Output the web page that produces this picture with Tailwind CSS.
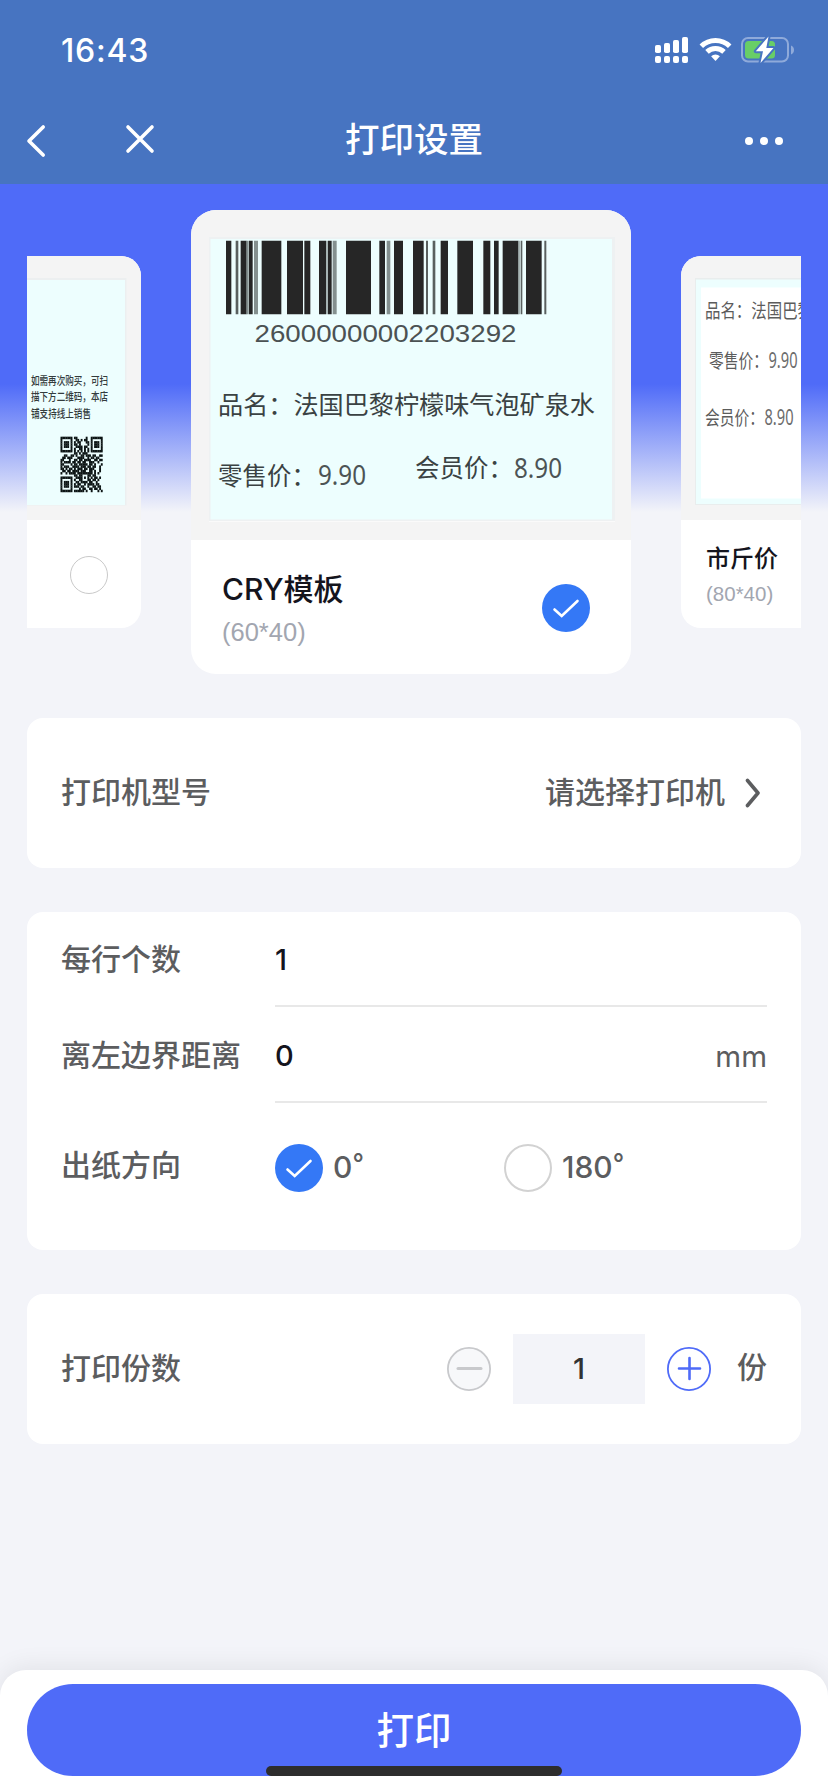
<!DOCTYPE html>
<html lang="zh-CN">
<head>
<meta charset="utf-8">
<title>打印设置</title>
<script src="https://cdn.jsdelivr.net/npm/@tailwindcss/browser@4"></script>
</head>
<body class="bg-[#f3f4f9] font-['Inter','Noto_Sans_CJK_SC',sans-serif] text-[30px] text-[#5c5d5f]">
<div class="flex h-[1792px] w-[828px] flex-col overflow-hidden">
  <header class="flex h-[184px] flex-col bg-[#4774c1] text-white">
    <div class="flex h-[98px] items-center justify-between pt-[2px] pr-[34px] pl-[61px]">
      <span class="pt-[2px] text-[32px] leading-[40px] font-medium tracking-[0.8px]">16:43</span>
      <div class="flex items-center">
        <svg class="h-[26px] w-[33px]" viewBox="0 0 33 26" fill="#fff">
          <rect x="0" y="8" width="6" height="8" rx="1.8"/><rect x="9" y="6" width="6" height="10" rx="1.8"/><rect x="18" y="3" width="6" height="13" rx="1.8"/><rect x="27" y="0" width="6" height="16" rx="1.8"/>
          <rect x="0" y="19" width="6" height="7" rx="2"/><rect x="9" y="19" width="6" height="7" rx="2"/><rect x="18" y="19" width="6" height="7" rx="2"/><rect x="27" y="19" width="6" height="7" rx="2"/>
        </svg>
        <svg class="mr-[9px] ml-[11px] h-[26px] w-[33px]" viewBox="0 0 33 26" fill="none" stroke="#fff" stroke-width="5">
          <path d="M2.3 9.3a20.2 20.2 0 0 1 28.4 0"/><path d="M8 14.9a12.2 12.2 0 0 1 17 0"/><path d="M12.1 19.2a6.4 6.4 0 0 1 8.8 0L16.5 24z" fill="#fff" stroke="none"/>
        </svg>
        <svg class="h-[28px] w-[53px]" viewBox="0 0 53 28">
          <rect x="1" y="2" width="46" height="23.5" rx="6" fill="none" stroke="#8faada" stroke-width="2"/>
          <path d="M50 9.500c4 1.500 4 7.500 0 9z" fill="#8faada"/>
          <rect x="4" y="5" width="30" height="17.500" rx="3.500" fill="#68ce67"/>
          <path d="M27.500 .5 14.800 15.300h7.200L19.500 27 32.500 12h-7.200z" fill="#fff" stroke="#4774c1" stroke-width="4" stroke-linejoin="round" paint-order="stroke"/>
        </svg>
      </div>
    </div>
    <div class="grid h-[86px] grid-cols-3 items-center">
      <div class="flex items-center">
        <svg class="ml-[26px] h-[34px] w-[20px]" viewBox="0 0 20 34" fill="none" stroke="#fff" stroke-width="3.600" stroke-linecap="round" stroke-linejoin="round"><path d="M17.200 3 3 17l14.200 14"/></svg>
        <svg class="-mt-1 ml-[79px] h-[30px] w-[30px]" viewBox="0 0 30 30" fill="none" stroke="#fff" stroke-width="3.600" stroke-linecap="round"><path d="m3 3 24 24M27 3 3 27"/></svg>
      </div>
      <h1 class="-mt-[2px] text-center text-[34.500px] leading-[48px] font-medium">打印设置</h1>
      <div class="flex justify-end gap-[7px] pr-[45px]">
        <i class="size-2 rounded-full bg-white"></i><i class="size-2 rounded-full bg-white"></i><i class="size-2 rounded-full bg-white"></i>
      </div>
    </div>
  </header>

  <section class="h-[534px] bg-[linear-gradient(180deg,#4f6bf8_0,#4f6bf8_200px,#f3f4f9_328px)] px-[27px] pt-[26px]">
    <div class="flex items-center justify-between">
      <article class="h-[372px] w-[114px] overflow-hidden rounded-r-[20px] bg-white">
        <div class="h-[264px] bg-[#f4f4f4] pt-[22px]">
          <svg class="h-[228px] w-[100px]" viewBox="0 0 100 228">
            <rect width="99.500" height="227.500" fill="#eceff0"/><rect y="2" width="98" height="225" fill="#edfefe"/>
            <g class="font-['Noto_Sans_CJK_SC',sans-serif] font-medium" font-size="11.400" fill="#333b3c">
              <text x="4" y="107" textLength="77" lengthAdjust="spacingAndGlyphs">如需再次购买，可扫</text>
              <text x="4" y="123" textLength="77" lengthAdjust="spacingAndGlyphs">描下方二维码，本店</text>
              <text x="4" y="139.500" textLength="60" lengthAdjust="spacingAndGlyphs">铺支持线上销售</text>
            </g>
            <g id="qr" transform="translate(33.500 158.700) scale(1.680 2.210)" fill="#0c1414"></g>
          </svg>
        </div>
        <div class="flex h-[108px] items-center justify-end pr-[33px]"><i class="mt-[2px] size-[38px] rounded-full border-[1.500px] border-[#c9c9c9]"></i></div>
      </article>

      <article class="h-[464px] w-[440px] overflow-hidden rounded-[25px] bg-white">
        <div class="h-[330px] bg-[#f4f4f4] pt-[27px] pl-[18px]">
          <svg class="h-[285px] w-[406px]" viewBox="0 0 406 285">
            <rect width="406" height="284" fill="#eef1f2"/><rect x="1.500" y="2" width="401.500" height="280.500" fill="#edfefe"/>
            <rect x="0" y="284" width="406" height="1" fill="#fafafa"/>
            <g transform="translate(17 3.700) scale(.33333)" fill="#262626">
              <path d="M0 0h16v221h-16zM44 0h18v221h-18zM69 0h11v221h-11zM107 0h59v221h-59zM183 0h48v221h-48zM235 0h18v221h-18zM279 0h21v221h-21zM306 0h11v221h-11zM360 0h75v221h-75zM460 0h17v221h-17zM504 0h27v221h-27zM561 0h32v221h-32zM644 0h22v221h-22zM694 0h47v221h-47zM772 0h21v221h-21zM804 0h14v221h-14zM830 0h47v221h-47zM900 0h47v221h-47z"/>
              <path fill="#59605f" d="M29 0h8v221h-8zM600 0h6v221h-6zM620 0h8v221h-8zM884 0h5v221h-5zM955 0h6v221h-6z"/>
              <path fill="#84908f" d="M62 0h6v221h-6zM84 0h12v221h-12zM320 0h12v221h-12zM482 0h11v221h-11zM301 0h4v221h-4zM877 0h4v221h-4z"/>
            </g>
            <text class="font-['Liberation_Sans',sans-serif]" x="45.500" y="105" font-size="24.500" fill="#4b5253" textLength="262" lengthAdjust="spacingAndGlyphs">26000000002203292</text>
            <g class="font-['Noto_Sans_CJK_SC',sans-serif]" font-size="25" fill="#3a4243">
              <text x="9" y="177" textLength="377" lengthAdjust="spacingAndGlyphs">品名：法国巴黎柠檬味气泡矿泉水</text>
              <text x="9" y="247.500" textLength="98" lengthAdjust="spacingAndGlyphs">零售价：</text>
              <text x="206" y="240" textLength="98" lengthAdjust="spacingAndGlyphs">会员价：</text>
              <g class="font-['Noto_Sans',sans-serif]" font-size="26.500" fill="#4c5455">
                <text x="109" y="248" textLength="48" lengthAdjust="spacingAndGlyphs">9.90</text>
                <text x="305" y="240.500" textLength="48" lengthAdjust="spacingAndGlyphs">8.90</text>
              </g>
            </g>
          </svg>
        </div>
        <div class="flex h-[134px] items-center justify-between pr-[41px] pl-[31px]">
          <div class="mt-[2px]">
            <h2 class="text-[30px] leading-[48px] font-medium text-[#14141d]">CRY模板</h2>
            <p class="font-['Liberation_Sans',sans-serif] text-[25.500px] leading-[38px] text-[#a2a6b0]">(60*40)</p>
          </div>
          <svg class="mt-[2px] size-12" viewBox="0 0 48 48"><circle cx="24" cy="24" r="24" fill="#3478f6"/><path d="m12.500 25.500 7.200 6.500L35.500 17" fill="none" stroke="#fff" stroke-width="2.600" stroke-linecap="round"/></svg>
        </div>
      </article>

      <article class="h-[372px] w-[120px] overflow-hidden rounded-l-[20px] bg-white">
        <div class="h-[264px] bg-[#f4f4f4] pt-[22px] pl-[14px]">
          <svg class="h-[228px] w-[106px]" viewBox="0 0 106 228">
            <rect width="106" height="227" fill="#e9eded"/><rect x="1" y="1.500" width="105" height="224.500" fill="#edfefe"/><rect x="6" y="9.500" width="100" height="211" fill="#fff"/>
            <g class="font-['Noto_Sans_CJK_SC',sans-serif]" font-size="19.500" fill="#5c5c5c">
              <text x="10" y="39.500" textLength="108" lengthAdjust="spacingAndGlyphs">品名：法国巴黎</text>
              <text x="14" y="90" textLength="59" lengthAdjust="spacingAndGlyphs">零售价：</text>
              <text x="10" y="147" textLength="59" lengthAdjust="spacingAndGlyphs">会员价：</text>
              <g class="font-['Noto_Sans',sans-serif]" font-size="21.500" fill="#6c6c6c">
                <text x="73.500" y="90" textLength="29" lengthAdjust="spacingAndGlyphs">9.90</text>
                <text x="69.500" y="147" textLength="29" lengthAdjust="spacingAndGlyphs">8.90</text>
              </g>
            </g>
          </svg>
        </div>
        <div class="flex h-[108px] flex-col justify-center pt-[3px] pl-[25px]">
          <h2 class="text-[24px] leading-[36px] font-medium text-[#14141d]">市斤价</h2>
          <p class="font-['Liberation_Sans',sans-serif] text-[20.500px] leading-[34px] text-[#a2a6b0]">(80*40)</p>
        </div>
      </article>
    </div>
  </section>

  <main class="flex flex-col gap-[44px] px-[27px] font-medium">
    <section class="flex h-[150px] items-center rounded-[16px] bg-white pr-[40px] pl-[34px]">
      <span class="-mt-[2px] flex-1">打印机型号</span>
      <span class="-mt-[2px]">请选择打印机</span>
      <svg class="ml-[20px] h-[30px] w-[16px]" viewBox="0 0 16 30" fill="none" stroke="#5c5d5f" stroke-width="3.600" stroke-linecap="round" stroke-linejoin="round"><path d="m2.500 2.500 10.500 12.500-10.500 12.500"/></svg>
    </section>

    <section class="h-[338px] rounded-[16px] bg-white pr-[34px] pl-[34px]">
      <div class="flex h-[95px]">
        <span class="flex w-[214px] items-center">每行个数</span>
        <div class="flex flex-1 items-center border-b-2 border-[#e8e8e8] pt-[3px] text-[29px] text-[#14141d]">1</div>
      </div>
      <div class="flex h-[96px]">
        <span class="flex w-[214px] items-center">离左边界距离</span>
        <div class="flex flex-1 items-center justify-between border-b-2 border-[#e8e8e8] pt-[3px] text-[#14141d]"><span class="text-[29px]">0</span><span class="pt-[2px] text-[29.500px] font-normal text-[#5c5d5f]">mm</span></div>
      </div>
      <div class="flex h-[130px] items-center">
        <span class="-mt-[6px] w-[214px]">出纸方向</span>
        <div class="flex w-[229px] items-center gap-[10px]">
          <svg class="size-12" viewBox="0 0 48 48"><circle cx="24" cy="24" r="24" fill="#3478f6"/><path d="m12.500 25.500 7.200 6.500L35.500 17" fill="none" stroke="#fff" stroke-width="2.600" stroke-linecap="round"/></svg>
          <span class="flex h-[44px] leading-[42px]">0<span class="text-[25px] leading-[34px]">°</span></span>
        </div>
        <div class="flex items-center gap-[10px]">
          <i class="size-12 rounded-full border-2 border-[#d2d2d2]"></i>
          <span class="flex h-[44px] leading-[42px]">180<span class="text-[25px] leading-[34px]">°</span></span>
        </div>
      </div>
    </section>

    <section class="flex h-[150px] items-center rounded-[16px] bg-white px-[34px]">
      <span class="-mt-[2px] flex-1">打印份数</span>
      <svg class="size-[44px]" viewBox="0 0 44 44" stroke="#c8c9cc" stroke-linecap="round"><circle cx="22" cy="22" r="21.100" fill="#f7f8fa" stroke-width="1.800"/><path d="M11 21.500h23" stroke-width="3"/></svg>
      <div class="mx-[22px] flex h-[70px] w-[132px] items-center justify-center bg-[#f3f4f9] text-[29px] font-medium text-[#323233]">1</div>
      <svg class="size-[44px]" viewBox="0 0 44 44" fill="none" stroke="#4f6bf8" stroke-linecap="round"><circle cx="22" cy="22" r="21.100" stroke-width="1.800"/><path d="M12 21.500h21M22.500 11v21" stroke-width="2.600"/></svg>
      <span class="-mt-[4px] ml-[26px]">份</span>
    </section>
  </main>

  <footer class="relative mt-auto h-[122px] rounded-t-[26px] bg-white px-[27px] pt-[14px] shadow-[0_-4px_24px_rgba(0,0,0,0.07)]">
    <button class="block h-[92px] w-full rounded-full bg-[#4f6bf8] pt-[2px] text-[37.500px] font-medium text-white">打印</button>
    <div class="absolute top-[96px] left-[266px] h-[10px] w-[296px] rounded-full bg-[#2d2d2d]"></div>
  </footer>
</div>
<script>
  const rows = [
    '1111111011000001001111111','1000001001101011001000001','1011101010110001101011101','1011101011010000101011101','1011101001111011001011101',
    '1000001010011010101000001','1111111010101010101111111','0000000011010111000000000','0011001101001101110110011','0110111000111100101101100',
    '1100010011011011110011011','1011110110110110011100100','1100001011011111011010001','1011100111101110110110010','1101011010111011011100010',
    '0110110111101110011010010','1001011110111111111010100','0000000011011000110110000','1111111001111010101011010','1000001010011000110110100',
    '1011101001101111011001000','1011101010110010111101100','1011101011101100100110110','1000001000010110011011010','1111111011111101001000101'];
  document.getElementById('qr').innerHTML = rows.map((r, y) => [...r].map((c, x) =>
    c === '1' ? `<rect x="${x}" y="${y}" width="1.120" height="1.120"/>` : '').join('')).join('');
</script>
</body>
</html>
